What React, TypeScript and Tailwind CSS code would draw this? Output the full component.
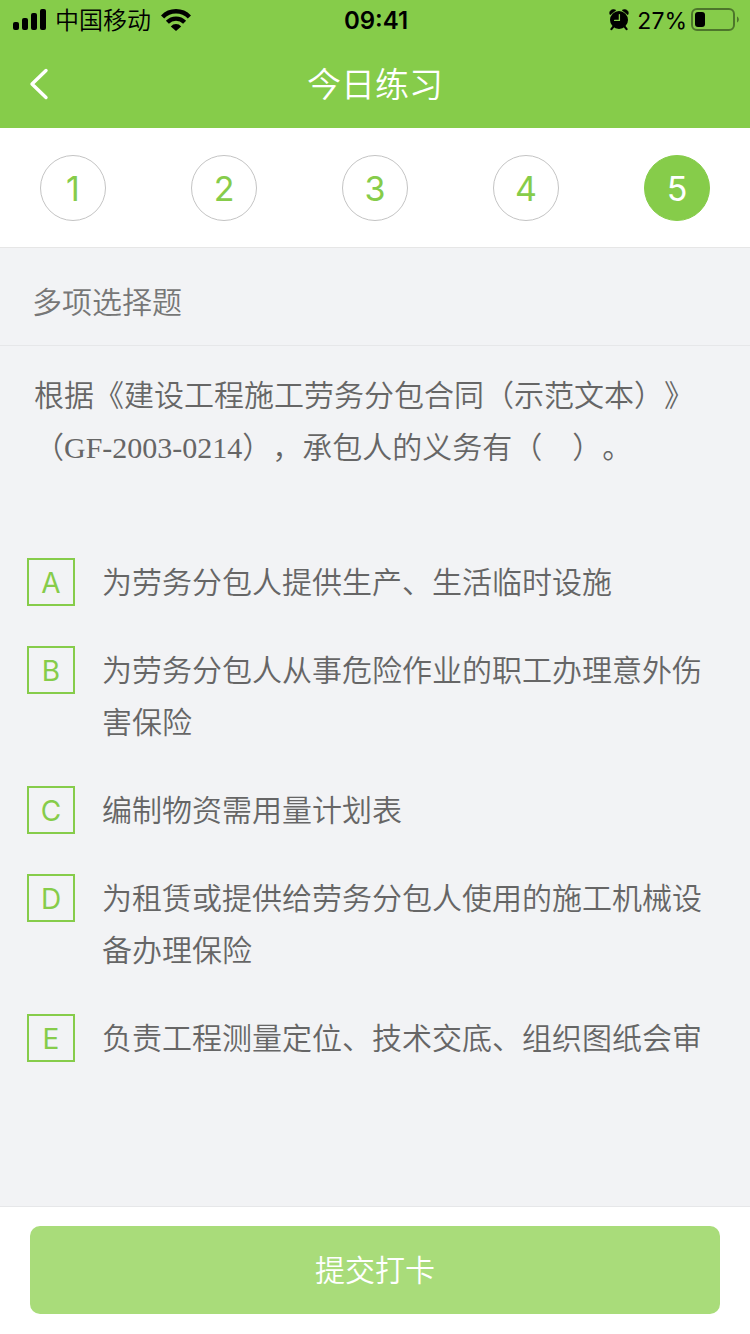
import { useState } from 'react'
import clsx from 'clsx'

const STEPS = [1, 2, 3, 4, 5]

const OPTIONS = [
  { key: 'A', text: '为劳务分包人提供生产、生活临时设施' },
  { key: 'B', text: '为劳务分包人从事危险作业的职工办理意外伤害保险' },
  { key: 'C', text: '编制物资需用量计划表' },
  { key: 'D', text: '为租赁或提供给劳务分包人使用的施工机械设备办理保险' },
  { key: 'E', text: '负责工程测量定位、技术交底、组织图纸会审' },
]

function SignalIcon() {
  return (
    <svg width="34" height="22" viewBox="0 0 34 22" aria-hidden="true">
      <rect x="0" y="13" width="6" height="8" rx="2" />
      <rect x="9" y="9" width="6" height="12" rx="2" />
      <rect x="18" y="4" width="6" height="17" rx="2" />
      <rect x="27" y="0" width="6" height="21" rx="2" />
    </svg>
  )
}

function WifiIcon() {
  return (
    <svg width="30" height="22" viewBox="0 0 30 22" fill="none" stroke="currentColor" aria-hidden="true">
      <path d="M1.6 8 A18.6 18.6 0 0 1 28.4 8" strokeWidth="4.4" />
      <path d="M6.4 13.2 A12 12 0 0 1 23.6 13.2" strokeWidth="4.2" />
      <path d="M9.8 17.4 A7 7 0 0 1 20.2 17.4 L15 22 Z" fill="currentColor" stroke="none" />
    </svg>
  )
}

function AlarmIcon() {
  return (
    <svg width="20" height="22" viewBox="0 0 20 22" aria-hidden="true">
      <path d="M1.2 5.8 C-0.8 2.6 3 -0.8 6.8 1.2 Z" stroke="currentColor" strokeWidth="0.6" />
      <path d="M18.8 5.8 C20.8 2.6 17 -0.8 13.2 1.2 Z" stroke="currentColor" strokeWidth="0.6" />
      <circle cx="10" cy="11" r="9" />
      <path d="M4.4 17.6 L2.4 20.2 M15.6 17.6 L17.6 20.2" stroke="currentColor" strokeWidth="2.2" strokeLinecap="round" />
      <path d="M10.4 5.6 V11.4 H5.6" fill="none" stroke="#86cc4a" strokeWidth="1.3" strokeLinecap="round" />
    </svg>
  )
}

function BatteryIcon() {
  return (
    <svg width="48" height="24" viewBox="0 0 48 24" aria-hidden="true">
      <rect x="1" y="1" width="42" height="21" rx="5" fill="none" stroke="#000" strokeOpacity="0.42" strokeWidth="2" />
      <rect x="4" y="4" width="10" height="15" rx="3" />
      <path d="M46 8.5 C48.4 9.5 48.4 13.5 46 14.5 Z" fillOpacity="0.42" />
    </svg>
  )
}

function StatusBar() {
  return (
    <div className="grid h-10 grid-cols-[1fr_auto_1fr] items-center pr-[11px] pl-[13px] text-2xl text-black">
      <div className="flex items-center gap-2">
        <SignalIcon />
        <span className="pt-0.5 font-[350]">中国移动</span>
        <span className="pl-0.5">
          <WifiIcon />
        </span>
      </div>
      <span className="pt-0.5 font-semibold">09:41</span>
      <div className="flex items-center justify-end">
        <AlarmIcon />
        <span className="mr-1 ml-2 pt-0.5 text-[23px] font-normal">27%</span>
        <BatteryIcon />
      </div>
    </div>
  )
}

export default function App() {
  const [step, setStep] = useState(5)
  const [selected, setSelected] = useState<string[]>([])

  const toggle = (key: string) => {
    setSelected((prev) => (prev.includes(key) ? prev.filter((k) => k !== key) : [...prev, key]))
  }

  return (
    <div className="flex min-h-screen flex-col bg-[#f2f3f5] font-['Inter','Noto_Sans_CJK_SC',sans-serif] font-[350] text-[#666] [text-spacing-trim:space-all]">
      <header className="bg-[#86cc4a]">
        <StatusBar />
        <div className="grid h-22 grid-cols-[1fr_auto_1fr] items-center px-7 text-white">
          <button type="button" aria-label="返回" className="justify-self-start">
            <svg width="22" height="32" viewBox="0 0 22 32" fill="none" stroke="currentColor" strokeWidth="3.4" strokeLinecap="round" strokeLinejoin="round">
              <path d="M18 2.5 L4 16 L18 29.5" />
            </svg>
          </button>
          <h1 className="text-[34px] font-[350]">今日练习</h1>
        </div>
      </header>

      <nav className="flex justify-between border-b border-[#e6e6e6] bg-white px-10 pt-[27px] pb-[26px]">
        {STEPS.map((n) => (
          <button
            key={n}
            type="button"
            onClick={() => setStep(n)}
            className={clsx(
              'size-[66px] rounded-full border text-[34px] font-normal',
              n === step ? 'border-[#86cc4a] bg-[#86cc4a] text-white' : 'border-[#c4c4c4] text-[#86cc4a]',
            )}
          >
            {n}
          </button>
        ))}
      </nav>

      <main className="flex-1 text-[30px] leading-[52px]">
        <h2 className="border-b border-[#e6e7e9] px-8 pt-7 pb-[17px] font-[350] text-[#777]">多项选择题</h2>
        <p className="px-[34px] pt-6 font-['Liberation_Serif','Noto_Sans_CJK_SC',serif]">
          根据《建设工程施工劳务分包合同（示范文本）》（GF-2003-0214），承包人的义务有（　）。
        </p>

        <ul className="flex flex-col gap-9 px-[27px] pt-[82px] pb-10">
          {OPTIONS.map((o) => {
            const checked = selected.includes(o.key)
            return (
              <li key={o.key}>
                <label className="flex cursor-pointer items-start gap-[27px]">
                  <input type="checkbox" className="sr-only" checked={checked} onChange={() => toggle(o.key)} />
                  <span
                    className={clsx(
                      'mt-0.5 flex size-12 shrink-0 items-center justify-center border-2 border-[#86cc4a] pt-0.5 text-[28px] font-normal',
                      checked ? 'bg-[#86cc4a] text-white' : 'text-[#86cc4a]',
                    )}
                  >
                    {o.key}
                  </span>
                  <span>{o.text}</span>
                </label>
              </li>
            )
          })}
        </ul>
      </main>

      <footer className="border-t border-[#e6e7e9] bg-white px-[30px] pt-[19px] pb-5">
        <button type="button" className="h-22 w-full rounded-[10px] bg-[#a9dc7a] text-[30px] text-white">
          提交打卡
        </button>
      </footer>
    </div>
  )
}
